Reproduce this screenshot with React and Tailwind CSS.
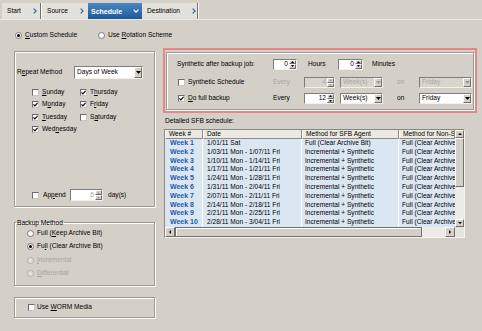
import React from "react";

function U({ children }) {
  return <span className="underline decoration-[0.6px] underline-offset-[1px]">{children}</span>;
}

function Chk({ on }) {
  return (
    <span className="inline-flex shrink-0 w-[7px] h-[7px] bg-white border border-t-[#6b6b6b] border-l-[#6b6b6b] border-b-[#c9c6bf] border-r-[#c9c6bf] items-center justify-center">
      {on && (
        <svg width="5" height="5" viewBox="0 0 5 5">
          <path d="M0.5 2.3 L1.9 3.9 L4.6 0.8" fill="none" stroke="#000" strokeWidth="1.1" />
        </svg>
      )}
    </span>
  );
}

function Radio({ on, disabled }) {
  return (
    <span
      className={`inline-flex shrink-0 w-[7px] h-[7px] rounded-full border items-center justify-center ${
        disabled ? "bg-[#e2e0db] border-[#b3afa8]" : "bg-white border-[#777777]"
      }`}
    >
      {on && <span className="w-[3px] h-[3px] rounded-full bg-black" />}
    </span>
  );
}

function SpinBtn({ up, disabled }) {
  return (
    <span className="flex-1 flex items-center justify-center bg-[#d4d0c8] border border-t-white border-l-white border-b-[#6f6f6f] border-r-[#6f6f6f]">
      <svg width="3" height="2" viewBox="0 0 3 2">
        <path d={up ? "M0 2 L3 2 L1.5 0 Z" : "M0 0 L3 0 L1.5 2 Z"} fill={disabled ? "#9d9a93" : "#000"} />
      </svg>
    </span>
  );
}

function Spin({ value, className = "", disabled, whiteBg }) {
  return (
    <div
      className={`flex shrink-0 border border-t-[#7d7d7d] border-l-[#7d7d7d] border-b-[#f2f1ee] border-r-[#f2f1ee] ${
        disabled ? (whiteBg ? "bg-white text-[#a9a59d]" : "bg-[#d8d5cf] text-[#a9a59d]") : "bg-white"
      } ${className}`}
    >
      <span className="flex-1 flex items-center justify-end pr-[1px]">{value}</span>
      <span className="w-[7px] flex flex-col">
        <SpinBtn up disabled={disabled} />
        <SpinBtn disabled={disabled} />
      </span>
    </div>
  );
}

function Select({ value, className = "", disabled }) {
  return (
    <div
      className={`flex shrink-0 border border-t-[#7d7d7d] border-l-[#7d7d7d] border-b-[#f2f1ee] border-r-[#f2f1ee] ${
        disabled ? "bg-[#d8d5cf] text-[#a9a59d]" : "bg-white"
      } ${className}`}
    >
      <span className="flex-1 flex items-center pl-[2px] whitespace-nowrap overflow-hidden">{value}</span>
      <span className="w-[8px] flex items-center justify-center bg-[#d4d0c8] border border-t-white border-l-white border-b-[#6f6f6f] border-r-[#6f6f6f]">
        <svg width="5" height="3" viewBox="0 0 5 3">
          <path d="M0 0 L5 0 L2.5 3 Z" fill={disabled ? "#9d9a93" : "#000"} />
        </svg>
      </span>
    </div>
  );
}

function Chev({ className = "" }) {
  return (
    <svg width="4" height="6" viewBox="0 0 4 6" className={className}>
      <path d="M0.6 0.6 L3.2 3 L0.6 5.4" fill="none" stroke="#2a63ad" strokeWidth="1.2" />
    </svg>
  );
}

function RaisedBtn({ className = "", children }) {
  return (
    <div className={`flex items-center justify-center bg-[#d4d0c8] border border-t-white border-l-white border-b-[#6f6f6f] border-r-[#6f6f6f] ${className}`}>
      {children}
    </div>
  );
}

const Tri = ({ d }) => (
  <svg width="4" height="4" viewBox="0 0 4 4">
    <path d={d} fill="#000" />
  </svg>
);

const dates = [
  ["Week 1", "1/01/11 Sat", "Full (Clear Archive Bit)"],
  ["Week 2", "1/03/11 Mon - 1/07/11 Fri", "Incremental + Synthetic"],
  ["Week 3", "1/10/11 Mon - 1/14/11 Fri", "Incremental + Synthetic"],
  ["Week 4", "1/17/11 Mon - 1/21/11 Fri", "Incremental + Synthetic"],
  ["Week 5", "1/24/11 Mon - 1/28/11 Fri", "Incremental + Synthetic"],
  ["Week 6", "1/31/11 Mon - 2/04/11 Fri", "Incremental + Synthetic"],
  ["Week 7", "2/07/11 Mon - 2/11/11 Fri", "Incremental + Synthetic"],
  ["Week 8", "2/14/11 Mon - 2/18/11 Fri", "Incremental + Synthetic"],
  ["Week 9", "2/21/11 Mon - 2/25/11 Fri", "Incremental + Synthetic"],
  ["Week 10", "2/28/11 Mon - 3/04/11 Fri", "Incremental + Synthetic"],
];

const etched = "border border-[#9d9a93] shadow-[inset_1px_1px_0_#ffffff,1px_1px_0_#ffffff]";

export default function App() {
  return (
    <div className="w-[482px] h-[331px] bg-[#d4d0c8] overflow-hidden font-['Liberation_Sans',Arial,sans-serif] text-[6.6px] leading-none text-black">
      {/* tab bar */}
      <div className="h-[19px] pt-[3px] pl-[2px] flex">
        <div className="w-[38px] h-[16px] bg-[#e3e1dc] flex items-center pl-[5px]">
          <span>Start</span>
          <Chev className="ml-auto mr-[3px]" />
        </div>
        <div className="w-px h-[16px] bg-[#6f6f6f]" />
        <div className="w-px h-[16px] bg-white" />
        <div className="w-[46px] h-[16px] bg-[#e3e1dc] flex items-center pl-[5px]">
          <span>Source</span>
          <Chev className="ml-auto mr-[4px]" />
        </div>
        <div className="w-[54px] h-[16px] bg-gradient-to-b from-[#4c88c6] to-[#1d5898] flex items-center pl-[3px]">
          <span className="font-bold text-white text-[7px]">Schedule</span>
          <svg width="6" height="4" viewBox="0 0 6 4" className="ml-auto mr-[3px]">
            <path d="M0.6 0.7 L3 3.2 L5.4 0.7" fill="none" stroke="#ffffff" strokeWidth="1.1" />
          </svg>
        </div>
        <div className="w-[55px] h-[16px] bg-[#e3e1dc] flex items-center pl-[5px]">
          <span>Destination</span>
          <Chev className="ml-auto mr-[1px]" />
        </div>
        <div className="w-px h-[16px] bg-[#6f6f6f]" />
        <div className="w-px h-[16px] bg-white" />
      </div>
      <div className="h-px bg-[#ebe9e4]" />

      {/* radio row */}
      <div className="h-[28px] pt-[9px] flex">
        <div className="h-[12px] w-[98px] flex items-center pl-[15px] gap-[3px]">
          <Radio on />
          <span>
            <U>C</U>ustom Schedule
          </span>
        </div>
        <div className="h-[12px] flex items-center gap-[3px]">
          <Radio />
          <span>
            Use <U>R</U>otation Scheme
          </span>
        </div>
      </div>

      <div className="flex">
        {/* left column */}
        <div className="ml-[14px] w-[141px] pt-[3px] flex flex-col">
          <div className={`h-[156px] flex flex-col ${etched}`}>
            <div className="mt-[14px] h-[13px] flex items-center">
              <span className="pl-[2px] w-[59px]">
                R<U>e</U>peat Method
              </span>
              <Select value="Days of Week" className="w-[69px] h-[13px]" />
            </div>
            <div className="mt-[6.75px] pl-[17px] grid grid-cols-[48px_1fr]">
              {[
                [["S", "unday"], false, ["T", "h", "ursday"], true],
                [["M", "o", "nday"], true, ["F", "r", "iday"], true],
                [["", "T", "uesday"], true, ["S", "a", "turday"], false],
                [["Wed", "n", "esday"], true, null, false],
              ].map((r, i) => (
                <React.Fragment key={i}>
                  <div className="h-[12.5px] flex items-center gap-[3px] whitespace-nowrap">
                    <Chk on={r[1]} />
                    {r[0].length === 2 ? (
                      <span>
                        <U>{r[0][0]}</U>
                        {r[0][1]}
                      </span>
                    ) : (
                      <span>
                        {r[0][0]}
                        <U>{r[0][1]}</U>
                        {r[0][2]}
                      </span>
                    )}
                  </div>
                  <div className="h-[12.5px] flex items-center gap-[3px] whitespace-nowrap">
                    {r[2] && (
                      <>
                        <Chk on={r[3]} />
                        <span>
                          {r[2][0]}
                          <U>{r[2][1]}</U>
                          {r[2][2]}
                        </span>
                      </>
                    )}
                  </div>
                </React.Fragment>
              ))}
            </div>
            <div className="mt-auto mb-[5px] h-[12px] flex items-center pl-[17px]">
              <Chk />
              <span className="ml-[4px] w-[23px]">
                Ap<U>p</U>end
              </span>
              <Spin value="6" className="ml-[4px] w-[33px] h-[12px]" disabled whiteBg />
              <span className="ml-[5px]">day(s)</span>
            </div>
          </div>

          <fieldset className={`mt-[10.5px] pb-[4.5px] ${etched}`}>
            <legend className="ml-[1px] px-[1px] leading-[9px]">Backup Method</legend>
            <div className="h-[13.5px] flex items-center pl-[12px] gap-[3px]">
              <Radio />
              <span>
                Full (<U>K</U>eep Archive Bit)
              </span>
            </div>
            <div className="h-[13.5px] flex items-center pl-[12px] gap-[3px]">
              <Radio on />
              <span>
                Fu<U>l</U>l (Clear Archive Bit)
              </span>
            </div>
            <div className="h-[13.5px] flex items-center pl-[12px] gap-[3px] text-[#a9a59d]">
              <Radio disabled />
              <span>
                <U>I</U>ncremental
              </span>
            </div>
            <div className="h-[13.5px] flex items-center pl-[12px] gap-[3px] text-[#a9a59d]">
              <Radio disabled />
              <span>
                <U>D</U>ifferential
              </span>
            </div>
          </fieldset>

          <div className={`mt-[11px] h-[21px] flex items-center pl-[13px] gap-[2px] ${etched}`}>
            <Chk />
            <span>
              Use <U>W</U>ORM Media
            </span>
          </div>
        </div>

        {/* right column */}
        <div className="ml-[8px] w-[314px]">
          <div className="h-[65px] border-2 border-[#e5868a] px-[1px] pt-[2px] pb-[1px]">
            <div className={`h-full ${etched}`}>
              <div className="mt-[5.5px] h-[11px] flex items-center pl-[10px]">
                <span className="w-[96px]">Synthetic after backup job:</span>
                <Spin value="0" className="w-[24px] h-[11px]" />
                <span className="ml-[11px] w-[30px]">Hours</span>
                <Spin value="0" className="w-[25px] h-[11px]" />
                <span className="ml-[9px]">Minutes</span>
              </div>
              <div className="mt-[7.5px] h-[11px] flex items-center pl-[11px]">
                <div className="w-[95px] flex items-center gap-[3px]">
                  <Chk />
                  <span>Synthetic Schedule</span>
                </div>
                <span className="w-[31px] text-[#a9a59d]">Every</span>
                <Spin value="4" className="w-[31px] h-[11px]" disabled />
                <Select value="Week(s)" className="ml-[5px] w-[43px] h-[11px]" disabled />
                <span className="w-[36px] pl-[14px] text-[#a9a59d]">on</span>
                <Select value="Friday" className="w-[53px] h-[11px]" disabled />
              </div>
              <div className="mt-[5px] h-[11px] flex items-center pl-[11px]">
                <div className="w-[95px] flex items-center gap-[3px]">
                  <Chk on />
                  <span>
                    <U>D</U>o full backup
                  </span>
                </div>
                <span className="w-[31px]">Every</span>
                <Spin value="12" className="w-[31px] h-[11px]" />
                <Select value="Week(s)" className="ml-[5px] w-[43px] h-[11px]" />
                <span className="w-[36px] pl-[14px]">on</span>
                <Select value="Friday" className="w-[53px] h-[11px]" />
              </div>
            </div>
          </div>

          <div className="h-[16px] flex items-center pl-[2px]">Detailed SFB schedule:</div>

          <div className="ml-[1px] w-[301px] h-[109px] border border-t-[#8a8780] border-l-[#8a8780] border-b-[#f5f4f1] border-r-[#f5f4f1]">
            <div className="flex h-[97px]">
              <div className="w-[290px] flex flex-col overflow-hidden">
                <div className="grid grid-cols-[38px_99px_97px_56px] h-[9px]">
                  {["Week #", "Date", "Method for SFB Agent", "Method for Non-SFB Agent"].map((h) => (
                    <div
                      key={h}
                      className="bg-[#ece9e2] border-r border-b border-r-[#8e8b84] border-b-[#8e8b84] border-l border-l-white pl-[3px] flex items-center whitespace-nowrap overflow-hidden"
                    >
                      {h}
                    </div>
                  ))}
                </div>
                {dates.map((r) => (
                  <div key={r[0]} className="grid grid-cols-[38px_99px_97px_56px] h-[8.8px]">
                    <div className="bg-[#dbe6f3] border-r border-white pl-[5px] font-bold text-[7px] text-[#1b5aa7] leading-[8.8px] whitespace-nowrap overflow-hidden">
                      {r[0]}
                    </div>
                    <div className="bg-[#dbe6f3] border-r border-white pl-[4px] leading-[8.8px] whitespace-nowrap overflow-hidden">
                      {r[1]}
                    </div>
                    <div className="bg-[#dbe6f3] border-r border-white pl-[3px] leading-[8.8px] whitespace-nowrap overflow-hidden">
                      {r[2]}
                    </div>
                    <div className="bg-[#dbe6f3] pl-[3px] leading-[8.8px] whitespace-nowrap overflow-hidden">
                      Full (Clear Archive Bit)
                    </div>
                  </div>
                ))}
              </div>
              <div className="w-[9px] flex flex-col">
                <RaisedBtn className="h-[8px]">
                  <Tri d="M0 3 L4 3 L2 1 Z" />
                </RaisedBtn>
                <RaisedBtn className="h-[49px]" />
                <div className="flex-1 bg-[#eeece8]" />
                <RaisedBtn className="h-[8px]">
                  <Tri d="M0 1 L4 1 L2 3 Z" />
                </RaisedBtn>
              </div>
            </div>
            <div className="flex h-[10px]">
              <div className="w-[290px] flex">
                <RaisedBtn className="w-[10px]">
                  <Tri d="M3 0 L3 4 L1 2 Z" />
                </RaisedBtn>
                <div className="w-[247px] bg-[#d4d0c8] border border-[#6f6f6f] shadow-[inset_1px_1px_0_#ffffff]" />
                <div className="flex-1 bg-[#eeece8]" />
                <RaisedBtn className="w-[10px]">
                  <Tri d="M1 0 L1 4 L3 2 Z" />
                </RaisedBtn>
              </div>
              <div className="w-[9px] bg-[#e6e4df]" />
            </div>
          </div>
        </div>
      </div>
    </div>
  );
}
